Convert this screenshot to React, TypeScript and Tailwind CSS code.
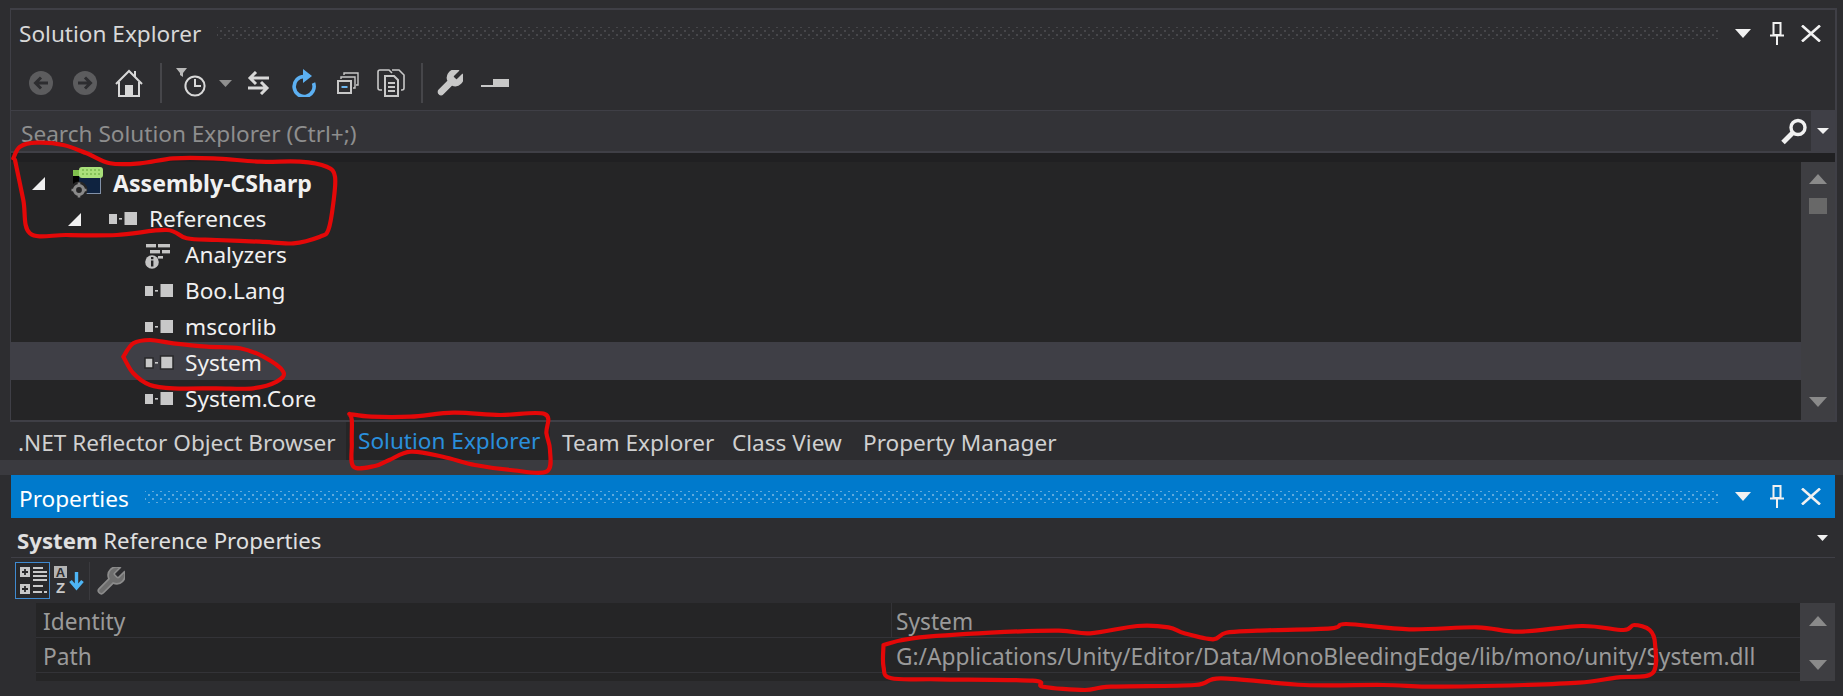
import React from "react";

type P = [number, number];
const smooth = (raw: P[], sx: number, sy: number, ox: number, oy: number) => {
  const p = raw.map(([x, y]) => [x / sx + ox, y / sy + oy]);
  let d = `M${p[0][0].toFixed(1)} ${p[0][1].toFixed(1)}`;
  for (let i = 0; i < p.length - 1; i++) {
    const a = p[Math.max(i - 1, 0)], b = p[i], c = p[i + 1], e = p[Math.min(i + 2, p.length - 1)];
    d += `C${(b[0] + (c[0] - a[0]) / 6).toFixed(1)} ${(b[1] + (c[1] - a[1]) / 6).toFixed(1)} ${(c[0] - (e[0] - b[0]) / 6).toFixed(1)} ${(c[1] - (e[1] - b[1]) / 6).toFixed(1)} ${c[0].toFixed(1)} ${c[1].toFixed(1)}`;
  }
  return d;
};

const scribbles = [
  smooth([[40,55],[60,20],[110,8],[190,15],[260,40],[330,70],[420,70],[520,55],[640,55],[780,65],[900,65],[980,80],[1005,110],[1000,190],[985,270],[960,290],[880,310],[780,305],[650,300],[560,295],[500,270],[350,285],[200,285],[90,280],[70,180],[45,60]], 3, 3, 0, 140),
  smooth([[370,650],[400,610],[450,600],[520,610],[620,620],[720,625],[790,650],[850,695],[830,725],[760,745],[650,745],[520,745],[450,735],[400,700],[370,650]], 3, 3, 0, 140),
  smooth([[978,42],[1040,50],[1150,50],[1270,38],[1400,45],[1525,42],[1530,100],[1540,150],[1530,215],[1430,210],[1330,195],[1240,170],[1150,155],[1090,180],[1050,198],[990,200],[985,130],[985,60],[978,42]], 2.8, 3, 0, 400),
  smooth([[45,165],[100,145],[250,128],[380,122],[440,130],[530,108],[590,112],[620,130],[675,148],[700,128],[760,122],[900,115],[930,102],[1050,118],[1180,112],[1260,125],[1380,108],[1460,120],[1480,105],[1510,120],[1520,160],[1515,250],[1450,262],[1375,278],[1270,285],[1100,290],[1000,285],[850,285],[690,265],[640,285],[480,290],[430,300],[350,290],[330,272],[150,268],[60,265],[45,230],[45,165]], 1.912, 3, 860, 590),
];

const WRENCH = "M14.7 6.3a1 1 0 0 0 0 1.4l1.6 1.6a1 1 0 0 0 1.4 0l3.77-3.77a6 6 0 0 1-7.94 7.94l-6.91 6.91a2.12 2.12 0 0 1-3-3l6.91-6.91a6 6 0 0 1 7.94-7.94l-3.76 3.76z";

const Circle = ({ dir, className }: { dir: "l" | "r"; className: string }) => (
  <svg width="24" height="24" viewBox="0 0 24 24" className={className}>
    <circle cx="12" cy="12" r="12" fill="#5c5c5e" />
    <path d={dir === "l" ? "M19 12H7M12 6.5L6.5 12l5.5 5.5" : "M5 12h12M12 6.5l5.5 5.5-5.5 5.5"} fill="none" stroke="#2d2d30" strokeWidth="3" />
  </svg>
);

const Sep = ({ className }: { className: string }) => <div className={`w-[2px] h-[40px] bg-[#46464a] ${className}`} />;

const Caret = ({ w, h, fill, className = "" }: { w: number; h: number; fill: string; className?: string }) => (
  <svg width={w} height={h} viewBox={`0 0 ${w} ${h}`} className={`shrink-0 ${className}`}>
    <polygon points={`0,0 ${w},0 ${w / 2},${h}`} fill={fill} />
  </svg>
);

const CaretUp = ({ className = "" }: { className?: string }) => (
  <svg width="18" height="10" viewBox="0 0 18 10" className={className}>
    <polygon points="0,10 18,10 9,0" fill="#8a8a8a" />
  </svg>
);

const Grip = ({ blue }: { blue?: boolean }) => (
  <div
    className={`flex-1 h-[12px] bg-[length:8px_8px] bg-[position:0_0,4px_4px] ${
      blue
        ? "bg-[radial-gradient(#5da9dd_1px,transparent_1.3px),radial-gradient(#5da9dd_1px,transparent_1.3px)]"
        : "bg-[radial-gradient(#46464a_1px,transparent_1.3px),radial-gradient(#46464a_1px,transparent_1.3px)]"
    }`}
  />
);

const TitleControls = () => (
  <>
    <Caret w={16} h={9} fill="#f1f1f1" className="ml-[17px]" />
    <svg width="14" height="23" viewBox="0 0 14 23" className="ml-[19px] shrink-0">
      <path d="M3.5 1h7v12h-7zM0 13.5h14M7 14v9" fill="none" stroke="#f1f1f1" strokeWidth="2" />
    </svg>
    <svg width="20" height="17" viewBox="0 0 20 17" className="ml-[17px] mr-[14px] shrink-0">
      <path d="M1 0.5L19 16.5M19 0.5L1 16.5" stroke="#f1f1f1" strokeWidth="2.6" />
    </svg>
  </>
);

const RefIcon = ({ selected }: { selected?: boolean }) => (
  <svg width="28" height="14" viewBox="0 0 28 14" className="shrink-0 overflow-visible">
    <rect x="0" y="2" width="8" height="10" fill="#c8c8c8" stroke={selected ? "#28282a" : "none"} strokeWidth="1.5" />
    <rect x="10" y="6" width="3" height="1.6" fill="#c8c8c8" />
    <rect x="15.5" y="0" width="12.5" height="13" fill="#c8c8c8" stroke={selected ? "#28282a" : "none"} strokeWidth="1.5" />
  </svg>
);

const Tri = ({ className }: { className: string }) => (
  <svg width="13" height="13" viewBox="0 0 13 13" className={`shrink-0 ${className}`}>
    <polygon points="13,0 13,13 0,13" fill="#f1f1f1" />
  </svg>
);

const ProjectIcon = () => (
  <svg width="31" height="32" viewBox="0 0 31 32" className="ml-[28px] shrink-0 overflow-visible">
    <rect x="0.5" y="3.5" width="27" height="23" fill="#0f2340" stroke="#8291a8" strokeWidth="1" />
    <rect x="0" y="3" width="6" height="19" fill="#000" />
    <rect x="0" y="3" width="8" height="6" fill="#7fbf4d" />
    <rect x="6" y="0" width="24" height="11" rx="3" fill="#a9e07a" />
    <path d="M9 3h20M9 7h20" stroke="#79b84f" strokeWidth="1.6" strokeDasharray="2 2" />
    <circle cx="6" cy="23" r="8.5" fill="#252526" />
    <circle cx="6" cy="23" r="4.5" fill="none" stroke="#8a8a8a" strokeWidth="3.2" />
    <path d="M6 15.5v3M6 27.5v3M-1.5 23h3M10.5 23h3" stroke="#8a8a8a" strokeWidth="2.6" />
  </svg>
);

const AnalyzerIcon = () => (
  <svg width="26" height="27" viewBox="0 0 26 27" className="shrink-0">
    <g fill="#c4c4c4">
      <rect x="1" y="2" width="10" height="3.4" />
      <rect x="13" y="2" width="12" height="3.4" />
      <rect x="5" y="8" width="10" height="3.4" />
      <rect x="17" y="8" width="8" height="3.4" />
      <rect x="13" y="14" width="5" height="2.6" />
      <circle cx="7" cy="20" r="6.8" />
    </g>
    <rect x="6" y="18.5" width="2.4" height="6" fill="#252526" />
    <rect x="6" y="15" width="2.4" height="2.2" fill="#252526" />
  </svg>
);

const Row = ({ children, selected, className = "" }: { children: React.ReactNode; selected?: boolean; className?: string }) => (
  <div className={`flex items-center pt-[4px] text-[22.6px] text-[#f1f1f1] ${selected ? "h-[38px] -my-px bg-[#3f3f46]" : "h-[36px]"} ${className}`}>{children}</div>
);

const Child = ({ name, selected, analyzer }: { name: string; selected?: boolean; analyzer?: boolean }) => (
  <Row selected={selected} className="pl-[134px]">
    {analyzer ? <AnalyzerIcon /> : <RefIcon selected={selected} />}
    <span className={analyzer ? "ml-[14px]" : "ml-[12px]"}>{name}</span>
  </Row>
);

export default function App() {
  return (
    <div className="relative w-[1843px] h-[696px] overflow-hidden bg-[#2d2d30] pt-[8px] font-['Noto_Sans','Open_Sans',sans-serif]">
      {/* Solution Explorer */}
      <div className="ml-[10px] w-[1827px] border-l border-r-2 border-t-2 border-[#3f3f46]">
        <div className="h-[46px] flex items-center pl-[8px] text-[22.6px] text-[#d8d8d8]">
          <span className="mr-[16px] pt-[2px]">Solution Explorer</span>
          <Grip />
          <TitleControls />
        </div>
        <div className="h-[54px] flex items-center border-b-0">
          <Circle dir="l" className="ml-[18px] shrink-0" />
          <Circle dir="r" className="ml-[20px] shrink-0" />
          <svg width="28" height="28" viewBox="0 0 28 28" className="ml-[18px] shrink-0">
            <path d="M1 15L14 2l13 13" fill="none" stroke="#d8d8d8" strokeWidth="2" />
            <path d="M20 2v6" stroke="#d8d8d8" strokeWidth="2" />
            <path d="M4 13v14h20V13" fill="none" stroke="#d8d8d8" strokeWidth="2" />
            <rect x="10" y="16" width="8" height="11" fill="#d8d8d8" />
          </svg>
          <Sep className="ml-[17px]" />
          <svg width="32" height="30" viewBox="0 0 32 30" className="ml-[14px] shrink-0">
            <polygon points="0,0 11,0 7,5 7,9 4,7 4,5" fill="#b8b8b8" />
            <circle cx="19" cy="18" r="9.6" fill="none" stroke="#d8d8d8" strokeWidth="2" />
            <path d="M19 11v7h6" fill="none" stroke="#d8d8d8" strokeWidth="2" />
          </svg>
          <Caret w={13} h={7} fill="#8f8f8f" className="ml-[11px]" />
          <svg width="24" height="24" viewBox="0 0 24 24" className="ml-[15px] shrink-0">
            <path d="M22 7H4M9 1L3 7l6 6" fill="none" stroke="#d8d8d8" strokeWidth="3" />
            <path d="M1 17h18M14 11l6 6-6 6" fill="none" stroke="#d8d8d8" strokeWidth="3" />
          </svg>
          <svg width="26" height="28" viewBox="0 0 26 28" className="ml-[20px] shrink-0">
            <path d="M13 7.5A10 10 0 1 0 22.5 14" fill="none" stroke="#5cb0f2" strokeWidth="3.6" />
            <polygon points="12,0 21,7 12,14" fill="#5cb0f2" />
          </svg>
          <svg width="22" height="22" viewBox="0 0 22 22" className="ml-[20px] shrink-0">
            <path d="M7 3V1h14v12h-2" fill="none" stroke="#c8c8c8" strokeWidth="1.4" />
            <path d="M4 7V5h14v11h-2" fill="none" stroke="#c8c8c8" strokeWidth="1.4" />
            <rect x="1" y="9" width="13" height="12" fill="none" stroke="#c8c8c8" strokeWidth="2" />
            <rect x="4.5" y="14" width="6" height="2" fill="#6cb6ef" />
          </svg>
          <svg width="28" height="28" viewBox="0 0 28 28" className="ml-[18px] shrink-0">
            <path d="M5 21H3a2 2 0 0 1-2-2V3a2 2 0 0 1 2-2h9l3 3" fill="none" stroke="#c8c8c8" strokeWidth="1.6" />
            <path d="M15 1h7l5 5v13a2 2 0 0 1-2 2h-1" fill="none" stroke="#c8c8c8" strokeWidth="1.6" />
            <path d="M8 7h9l4 4v16H8z" fill="#2d2d30" stroke="#c8c8c8" strokeWidth="2" />
            <path d="M11 14h7M11 18h7M11 22h7" stroke="#c8c8c8" strokeWidth="1.8" />
          </svg>
          <Sep className="ml-[16px]" />
          <svg width="26" height="26" viewBox="2 2 20 20" className="ml-[14px] shrink-0">
            <path d={WRENCH} fill="#c8c8c8" stroke="#c8c8c8" strokeWidth="1" />
          </svg>
          <svg width="28" height="8" viewBox="0 0 28 8" className="ml-[18px] shrink-0">
            <rect x="0" y="6" width="28" height="2" fill="#c8c8c8" />
            <rect x="12" y="0" width="16" height="8" fill="#c8c8c8" />
          </svg>
        </div>
        {/* Search */}
        <div className="h-[43px] flex border-t border-b-2 border-[#3f3f46] bg-[#333337]">
          <div className="flex-1 flex items-center justify-between pl-[10px] pr-[4px] text-[22.6px] text-[#8e8e8e]">
            <span className="pt-[5px]">Search Solution Explorer (Ctrl+;)</span>
            <svg width="26" height="27" viewBox="0 0 26 27" className="shrink-0">
              <circle cx="17" cy="9.5" r="7" fill="none" stroke="#f1f1f1" strokeWidth="3.4" />
              <path d="M12 14.5L2 24.5" stroke="#f1f1f1" strokeWidth="5" />
            </svg>
          </div>
          <div className="w-[24px] bg-[#3f3f46] flex items-center justify-center">
            <Caret w={12} h={6} fill="#f1f1f1" />
          </div>
        </div>
        <div className="h-[9px] bg-[#202022]" />
        {/* Tree */}
        <div className="h-[258px] flex bg-[#252526]">
          <div className="flex-1 pt-px">
            <Row>
              <Tri className="ml-[21px]" />
              <ProjectIcon />
              <span className="ml-[9px] font-bold text-[23.1px]">Assembly-CSharp</span>
            </Row>
            <Row>
              <Tri className="ml-[57px]" />
              <span className="ml-[28px] flex"><RefIcon /></span>
              <span className="ml-[12px]">References</span>
            </Row>
            <Child name="Analyzers" analyzer />
            <Child name="Boo.Lang" />
            <Child name="mscorlib" />
            <Child name="System" selected />
            <Child name="System.Core" />
          </div>
          <div className="w-[34px] bg-[#3e3e42] flex flex-col items-center pt-[12px] pb-[13px]">
            <CaretUp />
            <div className="mt-[14px] w-[18px] h-[16px] bg-[#686868]" />
            <CaretUp className="mt-auto rotate-180" />
          </div>
        </div>
      </div>

      {/* Tabs */}
      <div className="ml-[10px] w-[1827px] h-[40px] flex items-center border-t-2 border-[#3f3f46] text-[22.6px] text-[#d0d0d0] pl-px">
        <div className="w-[335px] pl-[7px] pt-[4px]">.NET Reflector Object Browser</div>
        <div className="w-[204px] h-full pl-[12px] bg-[#252526] text-[#2a8fdc] flex items-center">Solution Explorer</div>
        <div className="w-[172px] pl-[12px] pt-[4px]">Team Explorer</div>
        <div className="w-[131px] pl-[10px] pt-[4px]">Class View</div>
        <div className="pl-[10px] pt-[4px]">Property Manager</div>
      </div>
      <div className="h-[15px] bg-[#3a3a3f]" />

      {/* Properties */}
      <div className="ml-[11px] w-[1824px]">
        <div className="h-[43px] flex items-center bg-[#007acc] pl-[8px] text-[22.6px] text-[#ffffff]">
          <span className="mr-[16px] pt-[4px]">Properties</span>
          <Grip blue />
          <TitleControls />
        </div>
        <div className="h-[40px] flex items-center justify-between pl-[6px] pr-[7px] border-b border-[#3f3f46] text-[22.2px] text-[#e0e0e0] bg-[#2d2d30]">
          <span className="pt-[6px]"><b className="font-bold">System</b> Reference Properties</span>
          <Caret w={11} h={6} fill="#f1f1f1" />
        </div>
        <div className="h-[45px] flex items-center">
          <div className="ml-[4px] w-[35px] h-[37px] border border-[#3f8ad0] bg-[#28282a] flex items-center justify-center">
            <svg width="28" height="30" viewBox="0 0 28 30">
              <g fill="#c8c8c8">
                <rect x="1" y="1" width="10" height="10" />
                <rect x="1" y="18" width="10" height="10" />
                <rect x="14" y="1" width="10" height="2" />
                <rect x="14" y="5" width="14" height="2" />
                <rect x="14" y="9" width="14" height="2" />
                <rect x="14" y="13" width="14" height="2" />
                <rect x="14" y="19" width="10" height="2" />
                <rect x="14" y="25" width="9" height="2" />
                <rect x="25" y="25" width="3" height="2" />
              </g>
              <path d="M3 6h6M6 3v6M3 23h6M6 20v6" stroke="#28282a" strokeWidth="1.8" />
            </svg>
          </div>
          <svg width="30" height="29" viewBox="0 0 30 29" className="ml-[4px] shrink-0">
            <rect x="0" y="0" width="13" height="12" fill="#b4b4b4" />
            <text x="6.5" y="10.5" textAnchor="middle" fontSize="13" fontWeight="700" fontFamily="Liberation Sans" fill="#2d2d30">A</text>
            <text x="6.5" y="27" textAnchor="middle" fontSize="15" fontWeight="700" fontFamily="Liberation Sans" fill="#c8c8c8">Z</text>
            <path d="M22.5 6v16M16.5 15l6 7 6-7" fill="none" stroke="#4db5f5" strokeWidth="3.4" />
          </svg>
          <div className="ml-[5px] w-px h-[38px] bg-[#3a3a3e]" />
          <svg width="28" height="28" viewBox="2 2 20 20" className="ml-[7px] shrink-0">
            <path d={WRENCH} fill="#6e6e6e" stroke="#8c8c8c" strokeWidth="1.2" />
          </svg>
        </div>
        <div className="flex h-[78px]">
          <div className="w-[25px]" />
          <div className="flex-1 bg-[#252526] text-[22.7px] text-[#9a9a9a]">
            <div className="h-[35px] flex items-center border-b border-[#333337]">
              <div className="w-[856px] pl-[7px] pt-[4px] border-r border-[#333337] h-full flex items-center">Identity</div>
              <div className="pl-[4px] pt-[4px]">System</div>
            </div>
            <div className="h-[35px] flex items-center border-b border-[#333337]">
              <div className="w-[856px] pl-[7px] pt-[4px]">Path</div>
              <div className="pl-[4px] pt-[4px]">G:/Applications/Unity/Editor/Data/MonoBleedingEdge/lib/mono/unity/System.dll</div>
            </div>
          </div>
          <div className="w-[35px] bg-[#3e3e42] flex flex-col items-center pt-[13px] pb-[11px]">
            <CaretUp />
            <CaretUp className="mt-auto rotate-180" />
          </div>
        </div>
      </div>

      {/* Red annotations */}
      <svg width="1843" height="696" viewBox="0 0 1843 696" className="absolute inset-0 pointer-events-none">
        {scribbles.map((d, i) => (
          <path key={i} d={d} fill="none" stroke="#e40808" strokeWidth="4.2" strokeLinecap="round" strokeLinejoin="round" />
        ))}
      </svg>
    </div>
  );
}
